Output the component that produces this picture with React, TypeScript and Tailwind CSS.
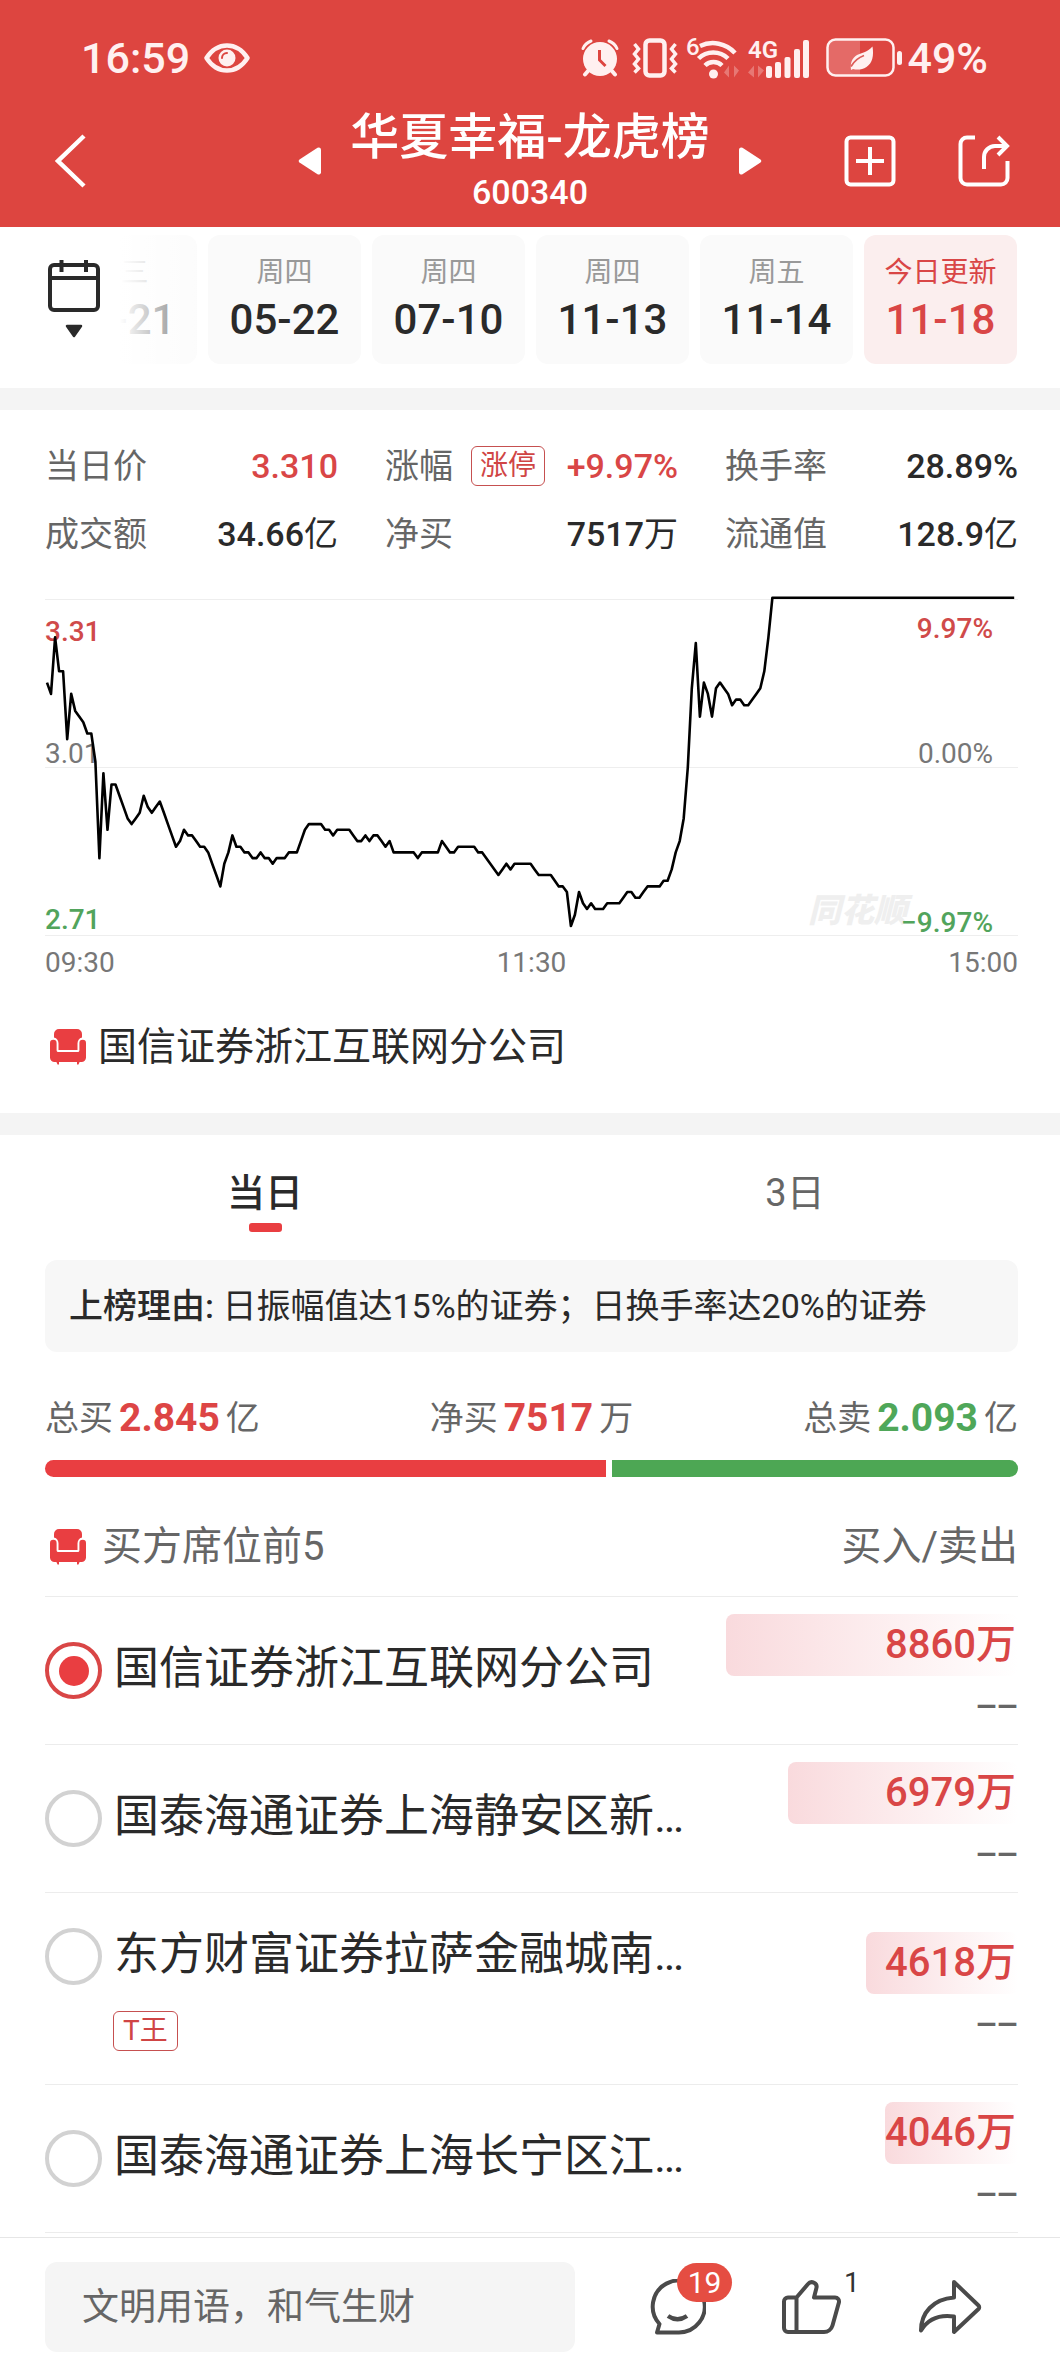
import React from "react";

/* ---------- data ---------- */

const dates = [
  { day: "周三", date: "05-21" },
  { day: "周四", date: "05-22" },
  { day: "周四", date: "07-10" },
  { day: "周四", date: "11-13" },
  { day: "周五", date: "11-14" },
  { day: "今日更新", date: "11-18", active: true },
];

type Stat = { label: string; value: string; unit?: string; tag?: string; red?: boolean };

const stats: Stat[] = [
  { label: "当日价", value: "3.310", red: true },
  { label: "涨幅", value: "+9.97%", tag: "涨停", red: true },
  { label: "换手率", value: "28.89%" },
  { label: "成交额", value: "34.66", unit: "亿" },
  { label: "净买", value: "7517", unit: "万" },
  { label: "流通值", value: "128.9", unit: "亿" },
];

const MAX_BUY = 8860;

const seats = [
  { name: "国信证券浙江互联网分公司", buy: 8860, checked: true },
  { name: "国泰海通证券上海静安区新…", buy: 6979 },
  { name: "东方财富证券拉萨金融城南…", buy: 4618, tag: "T王" },
  { name: "国泰海通证券上海长宁区江…", buy: 4046 },
];

/* [minute of the session, distance from the previous close in cents] */
const ticks: [number, number][] = [
  [0, 15], [1, 13], [2, 23], [3, 17], [4, 17], [5, 5], [6, 13], [7, 10], [8, 9], [9, 8], [10, 6], [11, 6],
  [12, 1], [13, -16], [14, -1], [15, -11], [16, -3], [17, -3], [18, -5], [19, -7], [20, -9], [21, -10],
  [22, -9], [23, -8], [24, -5], [25, -7], [26, -8], [27, -7], [28, -6], [29, -8], [30, -10], [31, -12],
  [32, -14], [33, -13], [34, -11], [35, -12], [36, -12], [37, -13], [38, -14], [39, -14], [40, -15],
  [41, -17], [42, -19], [43, -21], [44, -17], [45, -15], [46, -12], [47, -14], [48, -14], [49, -15],
  [50, -15], [51, -16], [52, -16], [53, -15], [54, -16], [55, -16], [56, -17], [57, -16], [59, -16],
  [60, -15], [62, -15], [63, -13], [64, -11], [65, -10], [68, -10], [69, -11], [70, -11], [71, -12],
  [72, -11], [75, -11], [76, -12], [77, -13], [78, -13], [79, -12], [80, -13], [81, -12], [82, -12],
  [83, -13], [84, -14], [85, -13], [86, -15], [91, -15], [92, -16], [93, -15], [97, -15], [98, -13],
  [99, -14], [100, -15], [101, -15], [102, -14], [106, -14], [107, -15], [108, -15], [112, -19],
  [113, -18], [114, -17], [115, -18], [116, -17], [120, -17], [121, -18], [122, -19], [125, -19],
  [126, -20], [127, -21], [128, -21], [129, -22], [130, -28], [131, -26], [132, -22], [133, -24],
  [134, -25], [135, -24], [136, -25], [138, -25], [139, -24], [142, -24], [143, -23], [144, -22],
  [145, -22], [146, -23], [147, -23], [148, -22], [149, -21], [152, -21], [153, -20], [154, -20],
  [155, -18], [156, -15], [157, -13], [158, -9], [159, 0], [160, 14], [161, 22], [162, 9], [163, 15],
  [164, 13], [165, 9], [166, 14], [167, 15], [168, 14], [169, 13], [170, 11], [171, 12], [172, 12],
  [173, 11], [174, 11], [175, 12], [176, 13], [177, 14], [178, 17], [179, 23], [180, 30], [240, 30],
];

const linePoints = ticks
  .map(([m, n]) => `${(2 + m * 4.03).toFixed(1)},${(177.5 - n * 5.66).toFixed(1)}`)
  .join(" ");

/* ---------- icons ---------- */

function EyeIcon() {
  return (
    <svg width="46" height="30" viewBox="0 0 46 30" fill="none" aria-hidden="true">
      <path d="M2.500 15C8 6.500 15 2.500 23 2.500S38 6.500 43.500 15C38 23.500 31 27.500 23 27.500S8 23.500 2.500 15Z" stroke="currentColor" strokeWidth="4.500" strokeLinejoin="round" />
      <circle cx="23" cy="15" r="8.500" fill="currentColor" />
      <path d="M18 15a5 5 0 0 1 5-5" stroke="#dd4540" strokeWidth="2" strokeLinecap="round" />
    </svg>
  );
}

function AlarmIcon() {
  return (
    <svg width="38" height="38" viewBox="0 0 38 38" fill="none" aria-hidden="true">
      <circle cx="19" cy="20" r="17" fill="currentColor" />
      <path d="M2 9.500C3.500 6 6 3.500 10 2M36 9.500C34.500 6 32 3.500 28 2" stroke="currentColor" strokeWidth="3" strokeLinecap="round" />
      <path d="M7 32l-3 3.500M31 32l3 3.500" stroke="currentColor" strokeWidth="4" strokeLinecap="round" />
      <path d="M18.500 11v10l6 6" stroke="#dd4540" strokeWidth="3" />
    </svg>
  );
}

function VibrateIcon() {
  return (
    <svg width="46" height="40" viewBox="0 0 46 40" fill="none" stroke="currentColor" aria-hidden="true">
      <rect x="13.500" y="2.500" width="19" height="35" rx="4" strokeWidth="4.500" />
      <path d="M2.500 6l4 5-4 5 4 5-4 5 4 4.500-4 4M43.500 6l-4 5 4 5-4 5 4 5-4 4.500 4 4" strokeWidth="3.500" />
    </svg>
  );
}

function WifiIcon() {
  return (
    <svg width="54" height="41" viewBox="0 0 54 41" fill="none" aria-hidden="true" className="overflow-visible">
      <text x="0" y="17" fontSize="24" fontWeight="500" fontFamily="Roboto, sans-serif" fill="currentColor">6</text>
      <g stroke="currentColor" strokeWidth="4.500">
        <path d="M14 8A30 30 0 0 1 49 15" />
        <path d="M12.500 20.500A21 21 0 0 1 42 20.500" />
        <path d="M19 27.500A12 12 0 0 1 36 27.500" />
      </g>
      <circle cx="27.500" cy="36" r="4.500" fill="currentColor" />
      <path d="M38 34.500l5-7v12M53 32.500l-5 7v-12" fill="currentColor" opacity="0.3" />
    </svg>
  );
}

function SignalIcon() {
  return (
    <svg width="62" height="41" viewBox="0 0 62 41" aria-hidden="true" fill="currentColor" className="overflow-visible">
      <text x="0" y="20" fontSize="24" fontWeight="600" fontFamily="Roboto, sans-serif">4G</text>
      <path d="M0 34.500l6-7v12M16 32.500l-6 7v-12" opacity="0.3" />
      <rect x="18" y="28" width="6" height="12" rx="2" />
      <rect x="27" y="24" width="6" height="16" rx="2" />
      <rect x="36.500" y="19" width="6" height="21" rx="2" />
      <rect x="46" y="11" width="6" height="29" rx="2" />
      <rect x="55" y="2" width="6" height="38" rx="2" />
    </svg>
  );
}

function BatteryIcon() {
  return (
    <svg width="78" height="40" viewBox="0 0 78 40" fill="none" aria-hidden="true">
      <path d="M9 2h25v36H9a7 7 0 0 1-7-7V9a7 7 0 0 1 7-7Z" fill="currentColor" opacity="0.22" />
      <rect x="1.500" y="1.500" width="66" height="36" rx="8" stroke="currentColor" strokeWidth="2.500" />
      <rect x="71" y="13" width="5" height="14" rx="2.500" fill="currentColor" />
      <path d="M46.500 8.500c1.500 9 0 16.500-6 20.500-4.500 3-9.500 3-13.500 2l-2 1c-1-7 1-12 6-15 5-2.500 11-3 15.500-8.500Z" fill="currentColor" />
      <path d="M25 28.500c3.500-6 7.500-9 13-11" stroke="#dd5c58" strokeWidth="1.800" />
    </svg>
  );
}

function SeatIcon() {
  return (
    <svg width="36" height="36" viewBox="0 0 36 36" fill="#e93e41" aria-hidden="true" className="shrink-0">
      <path d="M4 8.500V5a5 5 0 0 1 5-5h18a5 5 0 0 1 5 5v3.500c-3 .8-4.500 3-4.500 6V21h-19v-6.500c0-3-1.500-5.200-4.500-6Z" />
      <path d="M0 14a3.300 3.300 0 0 1 6.600 0v7.500A1.600 1.600 0 0 0 8.200 23h19.600a1.600 1.600 0 0 0 1.600-1.500V14a3.300 3.300 0 0 1 6.600 0v14.500a4.500 4.500 0 0 1-4.500 4.500h-27A4.500 4.500 0 0 1 0 28.500Z" />
      <path d="M6 32h3v3.500H7.500ZM27 32h3l-1.500 3.500H27Z" />
    </svg>
  );
}

/* ---------- sections ---------- */

function Header() {
  return (
    <header className="bg-[#dd4540] pb-[9px] text-white">
      <div className="flex h-[104px] items-center justify-between pt-3 pl-[81px] pr-[72px] text-[#fff0f0]">
        <div className="flex items-center gap-[14px]">
          <span className="text-[43px] leading-none font-medium">16:59</span>
          <EyeIcon />
        </div>
        <div className="flex items-center">
          <AlarmIcon />
          <span className="ml-[13px]"><VibrateIcon /></span>
          <span className="ml-2"><WifiIcon /></span>
          <span className="ml-2"><SignalIcon /></span>
          <span className="ml-4"><BatteryIcon /></span>
          <span className="ml-[3px] text-[43px] leading-none font-medium">49%</span>
        </div>
      </div>
      <nav className="grid h-[114px] grid-cols-[1fr_auto_1fr] items-center">
        <button type="button" aria-label="返回" className="ml-[54px] justify-self-start">
          <svg width="32" height="54" viewBox="0 0 32 54" fill="none" stroke="currentColor" strokeWidth="4.500">
            <path d="M30 2L4 27L30 52" />
          </svg>
        </button>
        <div className="flex items-center gap-7">
          <button type="button" aria-label="上一只">
            <svg width="24" height="28" viewBox="0 0 24 28" fill="currentColor">
              <path d="M1.500 12.500L19.500.8A2.300 2.300 0 0 1 23 2.700v22.600a2.300 2.300 0 0 1-3.500 1.900L1.500 15.500a1.800 1.800 0 0 1 0-3Z" />
            </svg>
          </button>
          <div className="pt-[6px] text-center font-medium">
            <h1 className="text-[49px] leading-[56px] font-medium">华夏幸福-龙虎榜</h1>
            <p className="text-[34px] leading-[52px]">600340</p>
          </div>
          <button type="button" aria-label="下一只">
            <svg width="24" height="28" viewBox="0 0 24 28" fill="currentColor">
              <path d="M22.500 12.500L4.500.8A2.300 2.300 0 0 0 1 2.700v22.600a2.300 2.300 0 0 0 3.500 1.900l18-11.700a1.800 1.800 0 0 0 0-3Z" />
            </svg>
          </button>
        </div>
        <div className="flex gap-[62px] justify-self-end pr-[50px]">
          <button type="button" aria-label="添加自选">
            <svg width="52" height="52" viewBox="0 0 52 52" fill="none" stroke="currentColor" strokeWidth="4">
              <rect x="2.500" y="2.500" width="47" height="47" rx="4" />
              <path d="M26 12v28M12 26h28" />
            </svg>
          </button>
          <button type="button" aria-label="分享">
            <svg width="52" height="52" viewBox="0 0 52 52" fill="none" stroke="currentColor" strokeWidth="4">
              <path d="M17 2.500H9A6.500 6.500 0 0 0 2.500 9v34A6.500 6.500 0 0 0 9 49.500h34a6.500 6.500 0 0 0 6.500-6.500V26" />
              <path d="M26 34V22a11 11 0 0 1 11-11h12M40 2l9 9-9 9" />
            </svg>
          </button>
        </div>
      </nav>
    </header>
  );
}

function DateStrip() {
  return (
    <section className="flex pt-2 pr-[43px] pb-6 pl-[45px]">
      <button type="button" aria-label="选择日期" className="flex w-[75px] shrink-0 flex-col items-start pt-[25px] pl-[3px]">
        <svg width="52" height="80" viewBox="0 0 52 80" fill="none" stroke="#2a2a2a" strokeWidth="4">
          <rect x="2" y="5" width="48" height="45" rx="4" />
          <path d="M2 18h48M13.500 0v12M38 0v12" />
          <path d="M19 66h14l-7 10Z" fill="#2a2a2a" strokeWidth="2.500" strokeLinejoin="round" />
        </svg>
      </button>
      <div className="relative flex min-w-0 flex-1 justify-end gap-[11px] overflow-hidden">
        {dates.map((d) => (
          <button
            type="button"
            key={d.date}
            className={
              d.active
                ? "h-[129px] w-[153px] shrink-0 rounded-xl bg-[#fbeeee] pt-[21px] pb-[14px] text-[#d94646]"
                : "h-[129px] w-[153px] shrink-0 rounded-xl bg-[#fafafa] pt-[21px] pb-[14px] text-[#2a2a2a]"
            }
          >
            <span className={d.active ? "block text-[28px] leading-[34px]" : "block text-[28px] leading-[34px] text-[#999]"}>
              {d.day}
            </span>
            <span className="block text-[42px] leading-[60px] font-medium">{d.date}</span>
          </button>
        ))}
        <div className="pointer-events-none absolute inset-y-0 left-0 w-[84px] bg-linear-to-r from-white to-white/30" />
      </div>
    </section>
  );
}

function StatGrid() {
  return (
    <dl className="grid grid-cols-3 gap-x-[47px]">
      {stats.map((s) => (
        <div key={s.label} className="flex h-[68px] items-center justify-between whitespace-nowrap">
          <dt className="flex items-center gap-[18px] text-[34px] text-[#666]">
            {s.label}
            {s.tag && (
              <span className="rounded-md border border-[#c65050] px-2 text-[28px] leading-[38px] text-[#d04545]">
                {s.tag}
              </span>
            )}
          </dt>
          <dd className={s.red ? "text-[34px] font-medium text-[#d94646]" : "text-[34px] font-medium text-[#2a2a2a]"}>
            {s.value}
            {s.unit && <span className="font-normal">{s.unit}</span>}
          </dd>
        </div>
      ))}
    </dl>
  );
}

function PriceChart() {
  return (
    <figure className="mt-[22px]">
      <div className="relative h-[350px] text-[28px] leading-8">
        <span className="absolute right-[111px] bottom-[13px] text-[33px] font-black italic text-[#efefef]">同花顺</span>
        <span className="absolute top-[26px] left-0 font-medium text-[#d04a4a]">3.31</span>
        <span className="absolute top-[148px] left-0 text-[#777]">3.01</span>
        <span className="absolute top-[314px] left-0 font-medium text-[#52a45c]">2.71</span>
        <span className="absolute top-[23px] right-[25px] font-medium text-[#d04a4a]">9.97%</span>
        <span className="absolute top-[148px] right-[25px] text-[#777]">0.00%</span>
        <span className="absolute top-[317px] right-[25px] font-medium text-[#52a45c]">−9.97%</span>
        <svg viewBox="0 0 973 350" preserveAspectRatio="none" className="absolute inset-0 h-full w-full" fill="none" aria-hidden="true">
          <path d="M0 9.500H973M0 177.500H973M0 345.500H973" stroke="#eeeeee" strokeWidth="1" />
          <polyline points={linePoints} stroke="#000" strokeWidth="2.600" strokeLinejoin="round" />
        </svg>
      </div>
      <figcaption className="grid grid-cols-3 text-[28px] leading-[46px] text-[#777]">
        <span>09:30</span>
        <span className="text-center">11:30</span>
        <span className="text-right">15:00</span>
      </figcaption>
    </figure>
  );
}

function Totals() {
  return (
    <>
      <div className="mt-9 flex items-center justify-between text-[34px] leading-[60px] text-[#666]">
        <span className="flex items-center gap-[6px]">总买<b className="text-[39px] text-[#dd4545]">2.845</b>亿</span>
        <span className="flex items-center gap-[6px]">净买<b className="text-[39px] text-[#dd4545]">7517</b>万</span>
        <span className="flex items-center gap-[6px]">总卖<b className="text-[39px] text-[#4fa759]">2.093</b>亿</span>
      </div>
      <div className="mt-3 flex h-[17px] gap-[6px]">
        <div className="flex-[58] rounded-l-full bg-[#e93e41]" />
        <div className="flex-[42] rounded-r-full bg-[#4da754]" />
      </div>
    </>
  );
}

function SeatList() {
  return (
    <ul>
      {seats.map((s, i) => (
        <li
          key={s.name}
          className={
            s.tag
              ? "flex h-48 items-center justify-between border-b border-[#ececec]"
              : "flex h-[148px] items-center justify-between border-b border-[#ececec]"
          }
        >
          <div className="pb-1">
            <label htmlFor={`seat-${i}`} className="flex h-16 items-center gap-3 text-[45px] whitespace-nowrap text-[#2a2a2a]">
              <input
                id={`seat-${i}`}
                type="radio"
                name="seat"
                defaultChecked={s.checked}
                className="mt-1 grid size-[57px] shrink-0 appearance-none place-content-center rounded-full border-4 border-[#d2d2d2] before:size-[30px] before:rounded-full before:content-[''] checked:border-[#d94646] checked:before:bg-[#e93e41]"
              />
              {s.name}
            </label>
            {s.tag && (
              <span className="mt-6 ml-[68px] block w-fit rounded-md border border-[#c65050] px-[9px] text-[28px] leading-[38px] text-[#d04545]">
                {s.tag}
              </span>
            )}
          </div>
          <div className="flex w-[30%] flex-col items-end pt-[10px] pb-[10px]">
            <div
              className="flex h-[62px] items-center justify-end rounded-lg bg-linear-to-r from-[#f9dadd] to-white pr-[2px] text-[40px] font-medium whitespace-nowrap text-[#d94646]"
              style={{ width: `${(s.buy / MAX_BUY) * 100}%` }}
            >
              {s.buy}万
            </div>
            <span className="font-['Noto_Sans',sans-serif] text-[42px] leading-[52px] text-[#666]">––</span>
          </div>
        </li>
      ))}
    </ul>
  );
}

function Footer() {
  return (
    <footer className="mt-1 grid grid-cols-[530fr_443fr] items-center border-t border-[#e6e6e6] bg-white pt-6 pr-[42px] pb-[25px] pl-[45px]">
      <input
        type="text"
        aria-label="评论"
        placeholder="文明用语，和气生财"
        className="h-[90px] w-full rounded-xl bg-[#f5f5f5] px-[37px] text-[37px] text-[#2a2a2a] placeholder:text-[#666]"
      />
      <div className="flex items-center justify-between pr-9 pl-[75px] text-[#4a4a4a]">
        <button type="button" aria-label="评论 19" className="relative">
          <svg width="56" height="56" viewBox="0 0 56 56" fill="none" stroke="currentColor" strokeWidth="4" strokeLinejoin="round">
            <path d="M29 53.500H7L9.500 45A26 26 0 1 1 29 53.500Z" />
            <path d="M18 37Q27.500 43.500 37 37" strokeWidth="4.500" />
          </svg>
          <span className="absolute -top-4 left-[27px] h-[39px] w-[55px] rounded-full bg-[#e54d42] text-center text-[30px] leading-[39px] text-white">19</span>
        </button>
        <button type="button" aria-label="点赞 1" className="relative">
          <svg width="60" height="56" viewBox="0 0 60 56" fill="none" stroke="currentColor" strokeWidth="4" strokeLinejoin="round">
            <path d="M14.500 18.500L26 5a4.800 4.800 0 0 1 8.300 4.500L32 18.500h21a4 4 0 0 1 3.900 5L50.500 46.500a9 9 0 0 1-8.500 6.500H6a4 4 0 0 1-4-4V22.500a4 4 0 0 1 4-4h8.500V53" />
          </svg>
          <span className="absolute -top-3 left-[62px] text-[28px] leading-8 text-[#333]">1</span>
        </button>
        <button type="button" aria-label="转发">
          <svg width="64" height="56" viewBox="0 0 64 56" fill="none" stroke="currentColor" strokeWidth="4" strokeLinejoin="round">
            <path d="M36 3L60.500 26.500a2.500 2.500 0 0 1 0 3.500L36 53V37.500C22 35.500 10 40 3 51.500C3 34 15 20 36 18.500Z" />
          </svg>
        </button>
      </div>
    </footer>
  );
}

export default function App() {
  return (
    <div className="min-h-screen bg-white font-[Roboto,'Noto_Sans_CJK_SC',sans-serif]" lang="zh-CN">
      <Header />
      <DateStrip />
      <div className="h-[22px] bg-[#f4f4f4]" />
      <section className="pt-[22px] pr-[42px] pb-9 pl-[45px]">
        <StatGrid />
        <PriceChart />
        <div className="mt-[31px] flex h-[60px] items-center gap-3 pl-[5px] text-[39px] text-[#2a2a2a]">
          <SeatIcon />
          国信证券浙江互联网分公司
        </div>
      </section>
      <div className="h-[22px] bg-[#f4f4f4]" />
      <div className="grid h-[125px] grid-cols-2 text-[38px]" role="tablist">
        <button type="button" role="tab" aria-selected="true" className="flex flex-col items-center pt-[30px] font-medium text-[#2a2a2a]">
          <span className="leading-[56px]">当日</span>
          <span className="mt-[2px] h-[9px] w-[33px] rounded-[3px] bg-[#e93e41]" />
        </button>
        <button type="button" role="tab" aria-selected="false" className="flex flex-col items-center pt-[30px] text-[#666]">
          <span className="leading-[56px]">3日</span>
        </button>
      </div>
      <section className="pr-[42px] pl-[45px]">
        <p className="flex h-[92px] items-center rounded-xl bg-[#f7f7f7] px-6 text-[34px] whitespace-pre text-[#2a2a2a]">
          <span className="font-medium">上榜理由: </span>日振幅值达15%的证券；日换手率达20%的证券
        </p>
        <Totals />
        <div className="flex h-[120px] items-center justify-between border-b border-[#ececec] pt-5 text-[40px] text-[#666]">
          <h2 className="flex items-center gap-4 pl-[5px]">
            <SeatIcon />
            买方席位前5
          </h2>
          <span>买入/卖出</span>
        </div>
        <SeatList />
      </section>
      <Footer />
    </div>
  );
}
